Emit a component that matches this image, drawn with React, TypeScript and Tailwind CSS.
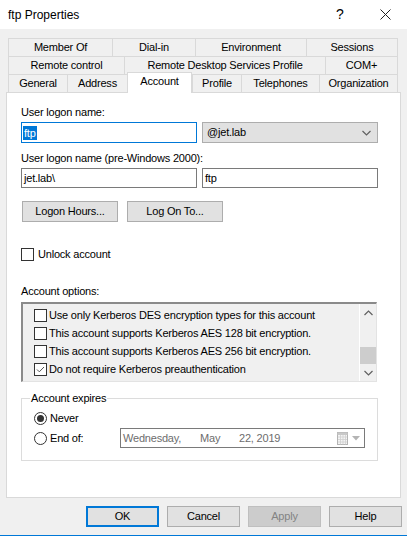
import React from "react";

const Check = ({ checked = false }: { checked?: boolean }) => (
  <span className="flex h-[13px] w-[13px] shrink-0 items-center justify-center border border-[#333333] bg-white">
    {checked && (
      <svg width="11" height="11" viewBox="0 0 11 11">
        <path d="M2 5.5 L4.3 7.8 L9 3" fill="none" stroke="#555" strokeWidth="1" />
      </svg>
    )}
  </span>
);

const Radio = ({ checked = false }: { checked?: boolean }) => (
  <span className="flex h-[13px] w-[13px] shrink-0 items-center justify-center rounded-full border border-[#333333] bg-white">
    {checked && <span className="h-[7px] w-[7px] rounded-full bg-[#333333]" />}
  </span>
);

const Chevron = ({ up = false, color = "#606060" }: { up?: boolean; color?: string }) => (
  <svg width="9" height="6" viewBox="0 0 9 6">
    <path d={up ? "M0.5 5 L4.5 1 L8.5 5" : "M0.5 1 L4.5 5 L8.5 1"} fill="none" stroke={color} strokeWidth="1.2" />
  </svg>
);

type Tab = { label: string; w: string; active?: boolean };

const row1: Tab[] = [
  { label: "Member Of", w: "w-[104px]" },
  { label: "Dial-in", w: "w-[83px]" },
  { label: "Environment", w: "w-[111px]" },
  { label: "Sessions", w: "w-[92px]" },
];
const row2: Tab[] = [
  { label: "Remote control", w: "w-[116px]" },
  { label: "Remote Desktop Services Profile", w: "w-[201px]" },
  { label: "COM+", w: "w-[73px]" },
];
const row3: Tab[] = [
  { label: "General", w: "w-[59px]" },
  { label: "Address", w: "w-[60px]" },
  { label: "Account", w: "w-[65px]", active: true },
  { label: "Profile", w: "w-[49px]" },
  { label: "Telephones", w: "w-[78px]" },
  { label: "Organization", w: "w-[79px]" },
];

const TabRow = ({ tabs, h }: { tabs: Tab[]; h: string }) => (
  <div className={`flex ${h}`}>
    {tabs.map((t, i) =>
      t.active ? (
        <div
          key={t.label}
          className={`${t.w} relative z-10 -mt-[2px] flex h-[21px] items-start justify-center border-x border-t border-[#d9d9d9] bg-white pt-[2px] leading-[13px]`}
        >
          {t.label}
        </div>
      ) : (
        <div
          key={t.label}
          className={`${t.w} flex items-center justify-center border-l border-t border-[#d9d9d9] bg-[#f0f0f0] leading-[13px] ${
            i === tabs.length - 1 ? "border-r" : ""
          }`}
        >
          {t.label}
        </div>
      )
    )}
  </div>
);

const BtnBase = "flex h-[21px] items-center justify-center border leading-[13px]";

export default function App() {
  const options = [
    { label: "Use only Kerberos DES encryption types for this account", checked: false },
    { label: "This account supports Kerberos AES 128 bit encryption.", checked: false },
    { label: "This account supports Kerberos AES 256 bit encryption.", checked: false },
    { label: "Do not require Kerberos preauthentication", checked: true },
  ];

  return (
    <div className="flex h-[536px] w-[407px] flex-col overflow-hidden bg-[#f0f0f0] font-['Liberation_Sans',Arial,sans-serif] text-[11px] tracking-[-0.2px] text-black">
      {/* Title bar */}
      <div className="flex h-[29px] shrink-0 items-center bg-white pl-[8px] text-[12px] tracking-normal">
        <span className="flex-1">ftp Properties</span>
        <span className="w-[14px] text-center text-[14px]">?</span>
        <span className="ml-[32px] mr-[16px] flex h-[12px] w-[12px] items-center justify-center">
          <svg width="11" height="11" viewBox="0 0 11 11">
            <path d="M0.5 0.5 L10.5 10.5 M10.5 0.5 L0.5 10.5" stroke="#222" strokeWidth="1" />
          </svg>
        </span>
      </div>

      {/* Tabs */}
      <div className="ml-[8px] mt-[9px] flex w-[390px] flex-col">
        <TabRow tabs={row1} h="h-[18px]" />
        <TabRow tabs={row2} h="h-[18px]" />
        <TabRow tabs={row3} h="h-[18px]" />
      </div>

      {/* Panel */}
      <div className="ml-[6px] flex h-[406px] w-[395px] flex-col border border-[#d9d9d9] bg-white pl-[14px] pt-[13px]">
        <div className="h-[13px] leading-[13px]">User logon name:</div>
        <div className="mt-[3px] flex gap-[5px]">
          <div className="flex h-[21px] w-[176px] items-center border border-[#0078d7] bg-white pl-[1px]">
            <span className="bg-[#0078d7] px-[1px] leading-[14px] text-white">ftp</span>
          </div>
          <div className="flex h-[21px] w-[176px] items-center justify-between border border-[#adadad] bg-[#e1e1e1] pl-[4px] pr-[6px]">
            <span className="leading-[13px]">@jet.lab</span>
            <Chevron />
          </div>
        </div>

        <div className="mt-[9px] h-[13px] leading-[13px]">User logon name (pre-Windows 2000):</div>
        <div className="mt-[3px] flex gap-[5px]">
          <div className="flex h-[20px] w-[176px] items-center border border-[#7a7a7a] bg-white pl-[2px]">jet.lab\</div>
          <div className="flex h-[20px] w-[176px] items-center border border-[#7a7a7a] bg-white pl-[2px]">ftp</div>
        </div>

        <div className="ml-[1px] mt-[13px] flex gap-[9px]">
          <div className={`${BtnBase} w-[96px] border-[#adadad] bg-[#e1e1e1]`}>Logon Hours...</div>
          <div className={`${BtnBase} w-[96px] border-[#adadad] bg-[#e1e1e1]`}>Log On To...</div>
        </div>

        <div className="mt-[26px] flex h-[13px] items-center gap-[4px]">
          <Check />
          <span className="leading-[13px]">Unlock account</span>
        </div>

        <div className="mt-[24px] h-[13px] leading-[13px]">Account options:</div>

        <div className="mt-[4px] flex h-[80px] w-[356px] border-b border-l-2 border-r border-t-2 border-b-[#e3e3e3] border-l-[#8a8a8a] border-r-[#e3e3e3] border-t-[#8a8a8a] bg-[#f0f0f0]">
          <div className="flex flex-1 flex-col overflow-hidden pl-[11px] pt-[2px]">
            {options.map((o) => (
              <div key={o.label} className="flex h-[18px] shrink-0 items-center gap-[2px] whitespace-nowrap">
                <Check checked={o.checked} />
                <span className="leading-[13px]">{o.label}</span>
              </div>
            ))}
          </div>
          <div className="flex w-[17px] flex-col border-l border-white bg-[#f0f0f0]">
            <div className="flex h-[17px] items-center justify-center">
              <Chevron up />
            </div>
            <div className="flex flex-1 flex-col justify-end">
              <div className="h-[17px] bg-[#cdcdcd]" />
            </div>
            <div className="flex h-[17px] items-center justify-center">
              <Chevron />
            </div>
          </div>
        </div>

        <div className="mt-[16px] flex w-[357px] flex-col border border-[#dcdcdc] pb-[12px] pl-[12px]">
          <div className="-mt-[7px] ml-[-4px] w-fit bg-white px-[1px] leading-[13px]">Account expires</div>
          <div className="mt-[3px] flex h-[20px] items-center gap-[3px]">
            <Radio checked />
            <span className="leading-[13px]">Never</span>
          </div>
          <div className="flex h-[20px] items-center">
            <Radio />
            <span className="ml-[3px] w-[70px] leading-[13px]">End of:</span>
            <div className="flex h-[20px] w-[245px] items-center border border-[#7a7a7a] bg-white pl-[2px] pr-[4px] text-[#6d6d6d]">
              <span className="w-[77px]">Wednesday,</span>
              <span className="w-[39px]">May</span>
              <span className="flex-1">22, 2019</span>
              <svg width="11" height="13" viewBox="0 0 11 13">
                <rect x="0.5" y="0.5" width="10" height="12" fill="#f4f4f4" stroke="#b4b4b4" />
                <rect x="0.5" y="0.5" width="10" height="2.5" fill="#c8c8c8" />
                <path d="M1 5 H10 M1 7.5 H10 M1 10 H10 M3.5 3 V12.5 M6 3 V12.5 M8.5 3 V12.5" stroke="#cfcfcf" strokeWidth="0.8" />
              </svg>
              <svg className="ml-[4px]" width="8" height="5" viewBox="0 0 8 5">
                <path d="M0 0 H8 L4 4.5 Z" fill="#b4b4b4" />
              </svg>
            </div>
          </div>
        </div>
      </div>

      {/* Bottom buttons */}
      <div className="mt-[8px] flex justify-end gap-[8px] pr-[5px]">
        <div className={`${BtnBase} w-[73px] border-2 border-[#0078d7] bg-[#e1e1e1]`}>OK</div>
        <div className={`${BtnBase} w-[73px] border-[#adadad] bg-[#e1e1e1]`}>Cancel</div>
        <div className={`${BtnBase} w-[73px] border-[#bfbfbf] bg-[#cccccc] text-[#838383]`}>Apply</div>
        <div className={`${BtnBase} w-[73px] border-[#adadad] bg-[#e1e1e1]`}>Help</div>
      </div>

      <div className="mt-auto h-[1px] shrink-0 bg-[#0078d7]" />
    </div>
  );
}
